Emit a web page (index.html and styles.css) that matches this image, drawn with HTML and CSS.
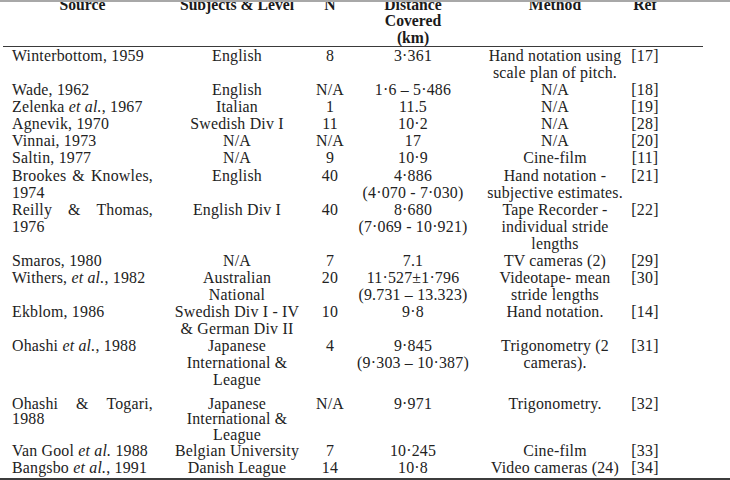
FILE: index.html
```html
<!DOCTYPE html>
<html>
<head>
<meta charset="utf-8">
<link rel="stylesheet" href="styles.css">
</head>
<body>
<div class="page">
<table class="tbl">
<colgroup>
<col class="c-src"><col class="c-sub"><col class="c-n"><col class="c-dist"><col class="c-meth"><col class="c-ref">
</colgroup>
<thead>
<tr>
<th class="src-h">Source</th>
<th>Subjects &amp; Level</th>
<th>N</th>
<th>Distance<br>Covered<br>(km)</th>
<th>Method</th>
<th class="ref">Ref</th>
</tr>
</thead>
<tbody>
<tr><td class="src">Winterbottom, 1959</td><td>English</td><td>8</td><td>3·361</td><td>Hand notation using<br>scale plan of pitch.</td><td class="ref">[17]</td></tr>
<tr><td class="src">Wade, 1962</td><td>English</td><td>N/A</td><td>1·6 – 5·486</td><td>N/A</td><td class="ref">[18]</td></tr>
<tr><td class="src">Zelenka <i>et al.</i>, 1967</td><td>Italian</td><td>1</td><td>11.5</td><td>N/A</td><td class="ref">[19]</td></tr>
<tr><td class="src">Agnevik, 1970</td><td>Swedish Div I</td><td>11</td><td>10·2</td><td>N/A</td><td class="ref">[28]</td></tr>
<tr><td class="src">Vinnai, 1973</td><td>N/A</td><td>N/A</td><td>17</td><td>N/A</td><td class="ref">[20]</td></tr>
<tr><td class="src">Saltin, 1977</td><td>N/A</td><td>9</td><td>10·9</td><td>Cine-film</td><td class="ref">[11]</td></tr>
<tr><td class="src"><span class="just"><span>Brookes</span><span>&amp;</span><span>Knowles,</span></span>1974</td><td>English</td><td>40</td><td>4·886<br>(4·070 - 7·030)</td><td>Hand notation -<br>subjective estimates.</td><td class="ref">[21]</td></tr>
<tr><td class="src"><span class="just"><span>Reilly</span><span>&amp;</span><span>Thomas,</span></span>1976</td><td>English Div I</td><td>40</td><td>8·680<br>(7·069 - 10·921)</td><td>Tape Recorder -<br>individual stride<br>lengths</td><td class="ref">[22]</td></tr>
<tr><td class="src">Smaros, 1980</td><td>N/A</td><td>7</td><td>7.1</td><td>TV cameras (2)</td><td class="ref">[29]</td></tr>
<tr><td class="src">Withers, <i>et al.</i>, 1982</td><td>Australian<br>National</td><td>20</td><td>11·527±1·796<br>(9.731 – 13.323)</td><td>Videotape- mean<br>stride lengths</td><td class="ref">[30]</td></tr>
<tr><td class="src">Ekblom, 1986</td><td>Swedish Div I - IV<br>&amp; German Div II</td><td>10</td><td>9·8</td><td>Hand notation.</td><td class="ref">[14]</td></tr>
<tr class="row-loose"><td class="src">Ohashi <i>et al.</i>, 1988</td><td>Japanese<br>International &amp;<br>League</td><td>4</td><td>9·845<br>(9·303 – 10·387)</td><td>Trigonometry (2<br>cameras).</td><td class="ref">[31]</td></tr>
<tr class="row-tight"><td class="src"><span class="just"><span>Ohashi</span><span>&amp;</span><span>Togari,</span></span>1988</td><td>Japanese<br>International &amp;<br>League</td><td>N/A</td><td>9·971</td><td>Trigonometry.</td><td class="ref">[32]</td></tr>
<tr><td class="src">Van Gool <i>et al.</i> 1988</td><td>Belgian University</td><td>7</td><td>10·245</td><td>Cine-film</td><td class="ref">[33]</td></tr>
<tr><td class="src">Bangsbo <i>et al.</i>, 1991</td><td>Danish League</td><td>14</td><td>10·8</td><td>Video cameras (24)</td><td class="ref">[34]</td></tr>
</tbody>
</table>
<div class="bottom-rule"></div>
</div>
</body>
</html>
```

FILE: styles.css
```css
html, body {
  margin: 0;
  padding: 0;
  background: #ffffff;
}

.page {
  position: relative;
  width: 730px;
  height: 480px;
  overflow: hidden;
  font-family: "Liberation Serif", "Times New Roman", serif;
  font-size: 15.9px;
  line-height: 17.08px;
  color: #222222;
}

.page::before {
  content: "";
  position: absolute;
  left: 0;
  top: 0;
  width: 730px;
  height: 2px;
  background: #a8a8a8;
  z-index: 2;
}

.tbl {
  margin-top: -4.5px;
  margin-left: 3px;
  width: 700px;
  table-layout: fixed;
  border-collapse: collapse;
  border-spacing: 0;
}

.c-src { width: 157px; }
.c-sub { width: 154px; }
.c-n { width: 32px; }
.c-dist { width: 134px; }
.c-meth { width: 150px; }
.c-ref { width: 73px; }

.tbl th,
.tbl td {
  padding: 0;
  text-align: center;
  vertical-align: top;
  white-space: nowrap;
}

.tbl td {
  letter-spacing: 0.2px;
}

.tbl th {
  padding-top: 1px;
  font-size: 15.7px;
  line-height: 16.5px;
  font-weight: bold;
  color: #1a1a1a;
  border-bottom: 1.3px solid #3a3a3a;
}

.tbl th.src-h {
  padding-left: 9px;
  padding-right: 7px;
}

.tbl td.src {
  text-align: left;
  padding-left: 9px;
  padding-right: 7px;
}

.tbl .ref {
  padding-right: 43px;
}

.tbl .row-loose td {
  padding-bottom: 7px;
}

.tbl .row-tight td {
  line-height: 15.5px;
}

.just {
  display: flex;
  justify-content: space-between;
}

.tbl i {
  font-style: italic;
}

.bottom-rule {
  margin-top: 1.5px;
  width: 730px;
  height: 2px;
  background: #3c3c3c;
}
```
